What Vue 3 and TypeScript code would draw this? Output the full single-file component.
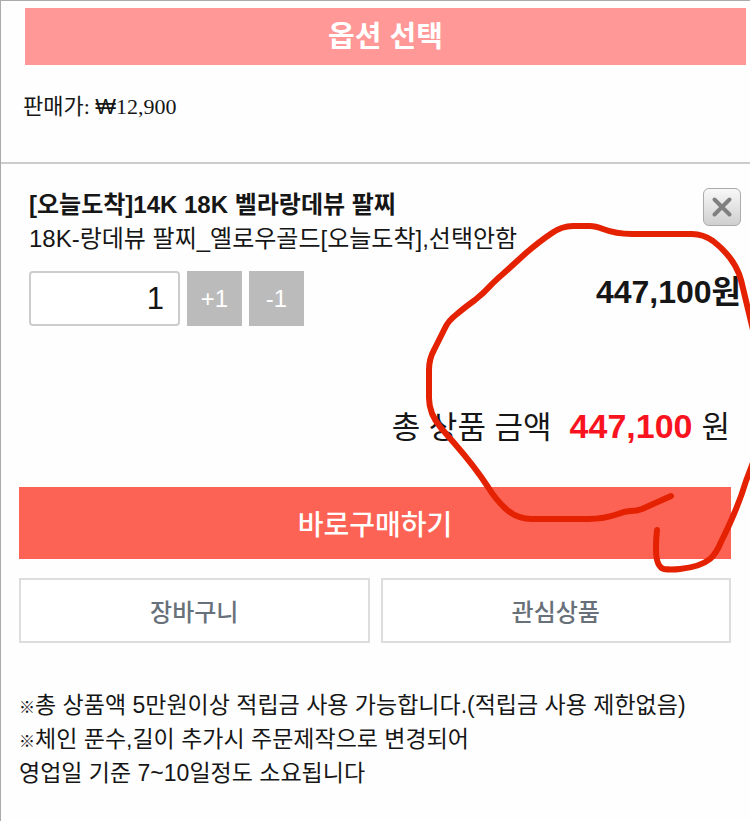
<script setup lang="ts">
import { computed, ref } from 'vue'

const unitPrice = 447100
const quantity = ref<number>(1)
const selected = ref<boolean>(true)

const total = computed<string>(() =>
  (selected.value ? unitPrice * Math.max(1, quantity.value || 1) : 0).toLocaleString('en-US'),
)

function change(step: number): void {
  quantity.value = Math.max(1, quantity.value + step)
}
</script>

<template>
  <main class="page">
    <h1 class="banner">옵션 선택</h1>
    <p class="base-price">판매가: <span class="won">₩</span>12,900</p>

    <section v-if="selected" class="item">
      <div class="item-head">
        <div>
          <h2 class="name">[오늘도착]14K 18K 벨라랑데뷰 팔찌</h2>
          <p class="option">18K-랑데뷰 팔찌_옐로우골드[오늘도착],선택안함</p>
        </div>
        <button class="remove" type="button" aria-label="삭제" @click="selected = false">
          <svg viewBox="0 0 24 24" width="24" height="24" aria-hidden="true">
            <path d="M4.500 4.500L19.500 19.500M19.500 4.500L4.500 19.500" />
          </svg>
        </button>
      </div>
      <div class="item-row">
        <input v-model.number="quantity" class="qty" type="text" inputmode="numeric" aria-label="수량" />
        <button class="step" type="button" @click="change(1)">+1</button>
        <button class="step" type="button" @click="change(-1)">-1</button>
        <strong class="subtotal">{{ total }}원</strong>
      </div>
    </section>

    <p class="total">
      <span>총 상품 금액</span>
      <strong class="amount">{{ total }}</strong>
      <span>원</span>
    </p>

    <div class="actions">
      <button class="buy" type="button">바로구매하기</button>
      <button class="ghost" type="button">장바구니</button>
      <button class="ghost" type="button">관심상품</button>
    </div>

    <div class="notes">
      <p><span class="mark">※</span>총 상품액 5만원이상 적립금 사용 가능합니다.(적립금 사용 제한없음)</p>
      <p><span class="mark">※</span>체인 푼수,길이 추가시 주문제작으로 변경되어</p>
      <p>영업일 기준 7~10일정도 소요됩니다</p>
    </div>

    <!-- Hand-drawn marker stroke circling the prices -->
    <svg class="marker" viewBox="0 0 750 821" width="750" height="821" aria-hidden="true">
      <path
        d="M671 496 L642 509 Q637 511 631 511 Q625 511 618 514 Q604 519 588 519 L532 519 Q517 519 506 509 Q496 500 488 487 Q475 467 455 444 L441 428 Q429 414 429 398 L429 370 Q429 359 434 350 L445 328 Q448 321 457 314 Q464 308 475 300 Q484 293 492 284 Q498 278 504 273 L526 253 Q540 241 552 233 Q562 226 573 226 L590 226 Q595 226 603 229 Q616 234 632 234 L692 234 Q703 234 713 241 Q735 258 741 280 L754 334"
      />
      <path d="M754 460 L746 481 Q738 508 721 542 Q716 554 710 559 Q700 567 680 569 Q671 570 664 569 Q656 567 656 549 Q656 538 657 530" />
    </svg>
  </main>
</template>

<style>
body {
  background: #fefefe;
}
</style>

<style scoped>
.page {
  position: relative;
  box-sizing: border-box;
  min-height: 100vh;
  overflow: hidden;
  padding-top: 7px;
  border-top: 1px solid #aaa;
  border-left: 1px solid #aaa;
  color: #161616;
  font-family: "Liberation Sans", "Noto Sans CJK KR", sans-serif;
}

h1,
h2,
p {
  margin: 0;
}

button,
input {
  box-sizing: border-box;
  margin: 0;
  padding: 0;
  border: 0;
  font-family: inherit;
}

button {
  cursor: pointer;
}

.banner {
  margin: 0 4px 0 24px;
  padding-top: 2px;
  background: #ff9896;
  color: #fff;
  font-size: 29px;
  font-weight: 700;
  line-height: 55px;
  text-align: center;
}

.base-price {
  padding: 24px 22px 38px;
  border-bottom: 2px solid #ccc;
  font-family: "Liberation Serif", "Noto Sans CJK KR", serif;
  font-size: 22px;
  line-height: 35px;
}

.won {
  font-family: "Liberation Sans", "Noto Sans", sans-serif;
  line-height: 1;
}

.item {
  padding: 24px 9px 0 28px;
}

.item-head {
  display: flex;
  justify-content: space-between;
}

.name,
.option {
  font-size: 24px;
  line-height: 34px;
}

.option {
  font-weight: 400;
}

.remove {
  display: grid;
  place-items: center;
  width: 38px;
  height: 38px;
  border: 1px solid #aaa;
  border-radius: 6px;
  background: linear-gradient(#f8f8f8, #cfcfcf);
}

.remove path {
  fill: none;
  stroke: #808080;
  stroke-width: 4;
  stroke-linecap: round;
}

.item-row {
  display: flex;
  gap: 7px;
  margin-top: 15px;
}

.qty {
  width: 151px;
  height: 55px;
  padding-right: 14px;
  border: 2px solid #ccc;
  border-radius: 4px;
  background: #fff;
  color: #161616;
  font-size: 31px;
  text-align: right;
}

.step {
  width: 55px;
  height: 55px;
  background: #bbb;
  color: #fff;
  font-size: 24px;
}

.subtotal {
  margin-left: auto;
  font-size: 32px;
  line-height: 42px;
}

.total {
  display: flex;
  justify-content: flex-end;
  align-items: baseline;
  padding: 77px 20px 36px;
  font-size: 31px;
  line-height: 46px;
}

.amount {
  margin: 0 9px 0 18px;
  color: #f9131f;
  font-size: 34px;
}

.actions {
  display: grid;
  grid-template-columns: 1fr 1fr;
  gap: 19px 11px;
  padding: 0 19px 0 18px;
}

.buy {
  grid-column: 1 / -1;
  height: 72px;
  background: #fd6354;
  color: #fff;
  font-size: 28px;
  font-weight: 500;
}

.ghost {
  height: 65px;
  border: 2px solid #ddd;
  background: #fff;
  color: #68717a;
  font-size: 24px;
  font-weight: 500;
}

.notes {
  padding: 45px 18px 24px;
  font-size: 23px;
  line-height: 34px;
}

.mark {
  font-size: 16px;
  font-weight: 700;
  line-height: 1;
}

.marker {
  position: absolute;
  top: -1px;
  left: -1px;
  pointer-events: none;
}

.marker path {
  fill: none;
  stroke: #e42100;
  stroke-width: 6;
  stroke-linecap: round;
  stroke-linejoin: round;
}
</style>
